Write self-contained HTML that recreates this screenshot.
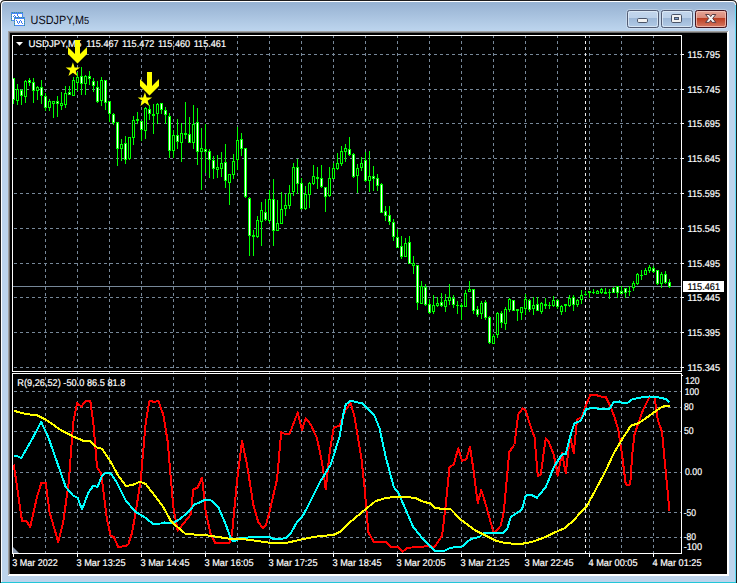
<!DOCTYPE html>
<html><head><meta charset="utf-8"><title>USDJPY,M5</title>
<style>html,body{margin:0;padding:0;background:#fff;overflow:hidden}svg{display:block}text{font-family:"Liberation Sans",sans-serif;text-rendering:geometricPrecision}</style></head><body>
<svg width="739" height="583" viewBox="0 0 739 583">
<defs>
<linearGradient id="tg" x1="0" y1="0" x2="0" y2="1"><stop offset="0" stop-color="#9ab5d4"/><stop offset="1" stop-color="#bdd5ee"/></linearGradient>
<linearGradient id="bt" x1="0" y1="0" x2="0" y2="1"><stop offset="0" stop-color="#c3d6ec"/><stop offset="0.43" stop-color="#bcd1e9"/><stop offset="0.44" stop-color="#9cb7d7"/><stop offset="1" stop-color="#b3cbe6"/></linearGradient>
<linearGradient id="bc" x1="0" y1="0" x2="0" y2="1"><stop offset="0" stop-color="#e6a799"/><stop offset="0.43" stop-color="#d98978"/><stop offset="0.44" stop-color="#bb3b1f"/><stop offset="1" stop-color="#d67c66"/></linearGradient>
</defs>
<rect x="0" y="0" width="739" height="583" fill="#fff"/>
<g shape-rendering="crispEdges">
<path d="M0 584 V5 Q0 0 5 0 H732 Q737 0 737 5 V584 Z" fill="#1c1c1c" shape-rendering="auto"/>
<path d="M1 584 V5 Q1 1 5 1 H732 Q736 1 736 5 V584 Z" fill="#fff" shape-rendering="auto"/>
<path d="M2 584 V5 Q2 2 5 2 H732 Q735 2 735 5 V584 Z" fill="#98b4d3" shape-rendering="auto"/>
<rect x="2" y="5" width="733" height="26" fill="url(#tg)"/>
<rect x="2" y="31" width="733" height="553" fill="#bdd4ec"/>
<rect x="735" y="5" width="1" height="579" fill="#62dcf7"/>
<rect x="1" y="582" width="735" height="1" fill="#22c6d8"/>
<rect x="8" y="31" width="721" height="545" fill="#fff"/>
<rect x="8" y="31" width="720" height="1" fill="#a0a0a0"/>
<rect x="8" y="31" width="1" height="544" fill="#a0a0a0"/>
<rect x="9" y="32" width="718" height="1" fill="#696969"/>
<rect x="9" y="32" width="1" height="542" fill="#696969"/>
<rect x="10" y="33" width="717" height="541" fill="#000"/>
</g>
<g shape-rendering="crispEdges" stroke="#778899" stroke-width="1" stroke-dasharray="3 3" fill="none">
<line x1="45.5" y1="35" x2="45.5" y2="371"/>
<line x1="45.5" y1="371" x2="45.5" y2="553"/>
<line x1="77.5" y1="35" x2="77.5" y2="371"/>
<line x1="77.5" y1="371" x2="77.5" y2="553"/>
<line x1="109.5" y1="35" x2="109.5" y2="371"/>
<line x1="109.5" y1="371" x2="109.5" y2="553"/>
<line x1="141.5" y1="35" x2="141.5" y2="371"/>
<line x1="141.5" y1="371" x2="141.5" y2="553"/>
<line x1="173.5" y1="35" x2="173.5" y2="371"/>
<line x1="173.5" y1="371" x2="173.5" y2="553"/>
<line x1="205.5" y1="35" x2="205.5" y2="371"/>
<line x1="205.5" y1="371" x2="205.5" y2="553"/>
<line x1="237.5" y1="35" x2="237.5" y2="371"/>
<line x1="237.5" y1="371" x2="237.5" y2="553"/>
<line x1="269.5" y1="35" x2="269.5" y2="371"/>
<line x1="269.5" y1="371" x2="269.5" y2="553"/>
<line x1="301.5" y1="35" x2="301.5" y2="371"/>
<line x1="301.5" y1="371" x2="301.5" y2="553"/>
<line x1="333.5" y1="35" x2="333.5" y2="371"/>
<line x1="333.5" y1="371" x2="333.5" y2="553"/>
<line x1="365.5" y1="35" x2="365.5" y2="371"/>
<line x1="365.5" y1="371" x2="365.5" y2="553"/>
<line x1="397.5" y1="35" x2="397.5" y2="371"/>
<line x1="397.5" y1="371" x2="397.5" y2="553"/>
<line x1="429.5" y1="35" x2="429.5" y2="371"/>
<line x1="429.5" y1="371" x2="429.5" y2="553"/>
<line x1="461.5" y1="35" x2="461.5" y2="371"/>
<line x1="461.5" y1="371" x2="461.5" y2="553"/>
<line x1="493.5" y1="35" x2="493.5" y2="371"/>
<line x1="493.5" y1="371" x2="493.5" y2="553"/>
<line x1="525.5" y1="35" x2="525.5" y2="371"/>
<line x1="525.5" y1="371" x2="525.5" y2="553"/>
<line x1="557.5" y1="35" x2="557.5" y2="371"/>
<line x1="557.5" y1="371" x2="557.5" y2="553"/>
<line x1="589.5" y1="35" x2="589.5" y2="371"/>
<line x1="589.5" y1="371" x2="589.5" y2="553"/>
<line x1="621.5" y1="35" x2="621.5" y2="371"/>
<line x1="621.5" y1="371" x2="621.5" y2="553"/>
<line x1="653.5" y1="35" x2="653.5" y2="371"/>
<line x1="653.5" y1="371" x2="653.5" y2="553"/>
<line x1="14" y1="54.5" x2="681" y2="54.5"/>
<line x1="14" y1="89.5" x2="681" y2="89.5"/>
<line x1="14" y1="123.5" x2="681" y2="123.5"/>
<line x1="14" y1="158.5" x2="681" y2="158.5"/>
<line x1="14" y1="193.5" x2="681" y2="193.5"/>
<line x1="14" y1="228.5" x2="681" y2="228.5"/>
<line x1="14" y1="263.5" x2="681" y2="263.5"/>
<line x1="14" y1="297.5" x2="681" y2="297.5"/>
<line x1="14" y1="332.5" x2="681" y2="332.5"/>
<line x1="14" y1="367.5" x2="681" y2="367.5"/>
<line x1="14" y1="391.5" x2="681" y2="391.5"/>
<line x1="14" y1="407.5" x2="681" y2="407.5"/>
<line x1="14" y1="431.5" x2="681" y2="431.5"/>
<line x1="14" y1="472.5" x2="681" y2="472.5"/>
<line x1="14" y1="512.5" x2="681" y2="512.5"/>
<line x1="14" y1="537.5" x2="681" y2="537.5"/>
</g>
<g shape-rendering="crispEdges" stroke="#f0f0f0" stroke-width="1" stroke-dasharray="3 3" fill="none">
<line x1="585.5" y1="35" x2="585.5" y2="371"/><line x1="585.5" y1="371" x2="585.5" y2="553"/>
</g>
<rect x="13" y="286" width="668" height="1" fill="#778899" shape-rendering="crispEdges"/>
<g shape-rendering="crispEdges">
<rect x="13" y="78" width="1" height="26" fill="#00ff00"/>
<rect x="12" y="78" width="3" height="22" fill="#00ff00"/>
<rect x="13" y="79" width="1" height="20" fill="#fff"/>
<rect x="17" y="84" width="1" height="21" fill="#00ff00"/>
<rect x="16" y="89" width="3" height="12" fill="#00ff00"/>
<rect x="17" y="90" width="1" height="10" fill="#000"/>
<rect x="21" y="89" width="1" height="16" fill="#00ff00"/>
<rect x="20" y="90" width="3" height="6" fill="#00ff00"/>
<rect x="21" y="91" width="1" height="4" fill="#fff"/>
<rect x="25" y="80" width="1" height="23" fill="#00ff00"/>
<rect x="24" y="81" width="3" height="16" fill="#00ff00"/>
<rect x="25" y="82" width="1" height="14" fill="#000"/>
<rect x="29" y="78" width="1" height="8" fill="#00ff00"/>
<rect x="28" y="80" width="3" height="3" fill="#00ff00"/>
<rect x="29" y="81" width="1" height="1" fill="#fff"/>
<rect x="33" y="78" width="1" height="25" fill="#00ff00"/>
<rect x="32" y="82" width="3" height="9" fill="#00ff00"/>
<rect x="33" y="83" width="1" height="7" fill="#fff"/>
<rect x="37" y="86" width="1" height="14" fill="#00ff00"/>
<rect x="36" y="87" width="3" height="4" fill="#00ff00"/>
<rect x="37" y="88" width="1" height="2" fill="#000"/>
<rect x="41" y="80" width="1" height="24" fill="#00ff00"/>
<rect x="40" y="87" width="3" height="9" fill="#00ff00"/>
<rect x="41" y="88" width="1" height="7" fill="#fff"/>
<rect x="45" y="93" width="1" height="18" fill="#00ff00"/>
<rect x="44" y="96" width="3" height="12" fill="#00ff00"/>
<rect x="45" y="97" width="1" height="10" fill="#fff"/>
<rect x="49" y="99" width="1" height="12" fill="#00ff00"/>
<rect x="48" y="101" width="3" height="7" fill="#00ff00"/>
<rect x="49" y="102" width="1" height="5" fill="#000"/>
<rect x="53" y="101" width="1" height="17" fill="#00ff00"/>
<rect x="52" y="101" width="3" height="3" fill="#00ff00"/>
<rect x="53" y="102" width="1" height="1" fill="#000"/>
<rect x="57" y="96" width="1" height="21" fill="#00ff00"/>
<rect x="56" y="101" width="3" height="3" fill="#00ff00"/>
<rect x="57" y="102" width="1" height="1" fill="#fff"/>
<rect x="61" y="92" width="1" height="18" fill="#00ff00"/>
<rect x="60" y="103" width="3" height="3" fill="#00ff00"/>
<rect x="61" y="104" width="1" height="1" fill="#000"/>
<rect x="65" y="86" width="1" height="22" fill="#00ff00"/>
<rect x="64" y="93" width="3" height="12" fill="#00ff00"/>
<rect x="65" y="94" width="1" height="10" fill="#000"/>
<rect x="69" y="86" width="1" height="9" fill="#00ff00"/>
<rect x="68" y="92" width="3" height="3" fill="#00ff00"/>
<rect x="69" y="93" width="1" height="1" fill="#fff"/>
<rect x="73" y="77" width="1" height="19" fill="#00ff00"/>
<rect x="72" y="80" width="3" height="16" fill="#00ff00"/>
<rect x="73" y="81" width="1" height="14" fill="#000"/>
<rect x="77" y="72" width="1" height="19" fill="#00ff00"/>
<rect x="76" y="77" width="3" height="6" fill="#00ff00"/>
<rect x="77" y="78" width="1" height="4" fill="#000"/>
<rect x="81" y="67" width="1" height="28" fill="#00ff00"/>
<rect x="80" y="76" width="3" height="8" fill="#00ff00"/>
<rect x="81" y="77" width="1" height="6" fill="#fff"/>
<rect x="85" y="75" width="1" height="20" fill="#00ff00"/>
<rect x="84" y="76" width="3" height="8" fill="#00ff00"/>
<rect x="85" y="77" width="1" height="6" fill="#000"/>
<rect x="89" y="71" width="1" height="14" fill="#00ff00"/>
<rect x="88" y="76" width="3" height="3" fill="#00ff00"/>
<rect x="89" y="77" width="1" height="1" fill="#fff"/>
<rect x="93" y="78" width="1" height="14" fill="#00ff00"/>
<rect x="92" y="81" width="3" height="5" fill="#00ff00"/>
<rect x="93" y="82" width="1" height="3" fill="#fff"/>
<rect x="97" y="81" width="1" height="22" fill="#00ff00"/>
<rect x="96" y="87" width="3" height="15" fill="#00ff00"/>
<rect x="97" y="88" width="1" height="13" fill="#fff"/>
<rect x="101" y="77" width="1" height="29" fill="#00ff00"/>
<rect x="100" y="80" width="3" height="21" fill="#00ff00"/>
<rect x="101" y="81" width="1" height="19" fill="#000"/>
<rect x="105" y="80" width="1" height="30" fill="#00ff00"/>
<rect x="104" y="80" width="3" height="23" fill="#00ff00"/>
<rect x="105" y="81" width="1" height="21" fill="#fff"/>
<rect x="109" y="101" width="1" height="21" fill="#00ff00"/>
<rect x="108" y="101" width="3" height="13" fill="#00ff00"/>
<rect x="109" y="102" width="1" height="11" fill="#fff"/>
<rect x="113" y="113" width="1" height="12" fill="#00ff00"/>
<rect x="112" y="114" width="3" height="9" fill="#00ff00"/>
<rect x="113" y="115" width="1" height="7" fill="#fff"/>
<rect x="117" y="122" width="1" height="44" fill="#00ff00"/>
<rect x="116" y="122" width="3" height="27" fill="#00ff00"/>
<rect x="117" y="123" width="1" height="25" fill="#fff"/>
<rect x="121" y="139" width="1" height="22" fill="#00ff00"/>
<rect x="120" y="144" width="3" height="5" fill="#00ff00"/>
<rect x="121" y="145" width="1" height="3" fill="#000"/>
<rect x="125" y="136" width="1" height="28" fill="#00ff00"/>
<rect x="124" y="143" width="3" height="17" fill="#00ff00"/>
<rect x="125" y="144" width="1" height="15" fill="#fff"/>
<rect x="129" y="137" width="1" height="23" fill="#00ff00"/>
<rect x="128" y="137" width="3" height="22" fill="#00ff00"/>
<rect x="129" y="138" width="1" height="20" fill="#000"/>
<rect x="133" y="116" width="1" height="29" fill="#00ff00"/>
<rect x="132" y="120" width="3" height="18" fill="#00ff00"/>
<rect x="133" y="121" width="1" height="16" fill="#000"/>
<rect x="137" y="112" width="1" height="12" fill="#00ff00"/>
<rect x="136" y="119" width="3" height="2" fill="#00ff00"/>
<rect x="141" y="121" width="1" height="20" fill="#00ff00"/>
<rect x="140" y="121" width="3" height="9" fill="#00ff00"/>
<rect x="141" y="122" width="1" height="7" fill="#fff"/>
<rect x="145" y="107" width="1" height="32" fill="#00ff00"/>
<rect x="144" y="108" width="3" height="23" fill="#00ff00"/>
<rect x="145" y="109" width="1" height="21" fill="#000"/>
<rect x="149" y="105" width="1" height="15" fill="#00ff00"/>
<rect x="148" y="109" width="3" height="5" fill="#00ff00"/>
<rect x="149" y="110" width="1" height="3" fill="#fff"/>
<rect x="153" y="104" width="1" height="30" fill="#00ff00"/>
<rect x="152" y="114" width="3" height="2" fill="#00ff00"/>
<rect x="157" y="103" width="1" height="21" fill="#00ff00"/>
<rect x="156" y="104" width="3" height="10" fill="#00ff00"/>
<rect x="157" y="105" width="1" height="8" fill="#000"/>
<rect x="161" y="103" width="1" height="11" fill="#00ff00"/>
<rect x="160" y="103" width="3" height="7" fill="#00ff00"/>
<rect x="161" y="104" width="1" height="5" fill="#fff"/>
<rect x="165" y="107" width="1" height="17" fill="#00ff00"/>
<rect x="164" y="110" width="3" height="5" fill="#00ff00"/>
<rect x="165" y="111" width="1" height="3" fill="#fff"/>
<rect x="169" y="113" width="1" height="45" fill="#00ff00"/>
<rect x="168" y="116" width="3" height="35" fill="#00ff00"/>
<rect x="169" y="117" width="1" height="33" fill="#fff"/>
<rect x="173" y="130" width="1" height="28" fill="#00ff00"/>
<rect x="172" y="135" width="3" height="16" fill="#00ff00"/>
<rect x="173" y="136" width="1" height="14" fill="#000"/>
<rect x="177" y="119" width="1" height="30" fill="#00ff00"/>
<rect x="176" y="135" width="3" height="7" fill="#00ff00"/>
<rect x="177" y="136" width="1" height="5" fill="#fff"/>
<rect x="181" y="123" width="1" height="39" fill="#00ff00"/>
<rect x="180" y="133" width="3" height="10" fill="#00ff00"/>
<rect x="181" y="134" width="1" height="8" fill="#000"/>
<rect x="185" y="102" width="1" height="37" fill="#00ff00"/>
<rect x="184" y="133" width="3" height="2" fill="#00ff00"/>
<rect x="189" y="117" width="1" height="26" fill="#00ff00"/>
<rect x="188" y="134" width="3" height="9" fill="#00ff00"/>
<rect x="189" y="135" width="1" height="7" fill="#fff"/>
<rect x="193" y="105" width="1" height="44" fill="#00ff00"/>
<rect x="192" y="124" width="3" height="19" fill="#00ff00"/>
<rect x="193" y="125" width="1" height="17" fill="#000"/>
<rect x="197" y="108" width="1" height="57" fill="#00ff00"/>
<rect x="196" y="122" width="3" height="30" fill="#00ff00"/>
<rect x="197" y="123" width="1" height="28" fill="#fff"/>
<rect x="201" y="128" width="1" height="62" fill="#00ff00"/>
<rect x="200" y="148" width="3" height="4" fill="#00ff00"/>
<rect x="201" y="149" width="1" height="2" fill="#000"/>
<rect x="205" y="124" width="1" height="49" fill="#00ff00"/>
<rect x="204" y="149" width="3" height="3" fill="#00ff00"/>
<rect x="205" y="150" width="1" height="1" fill="#fff"/>
<rect x="209" y="149" width="1" height="29" fill="#00ff00"/>
<rect x="208" y="151" width="3" height="9" fill="#00ff00"/>
<rect x="209" y="152" width="1" height="7" fill="#fff"/>
<rect x="213" y="156" width="1" height="23" fill="#00ff00"/>
<rect x="212" y="160" width="3" height="9" fill="#00ff00"/>
<rect x="213" y="161" width="1" height="7" fill="#fff"/>
<rect x="217" y="155" width="1" height="23" fill="#00ff00"/>
<rect x="216" y="167" width="3" height="3" fill="#00ff00"/>
<rect x="217" y="168" width="1" height="1" fill="#000"/>
<rect x="221" y="152" width="1" height="25" fill="#00ff00"/>
<rect x="220" y="163" width="3" height="6" fill="#00ff00"/>
<rect x="221" y="164" width="1" height="4" fill="#000"/>
<rect x="225" y="144" width="1" height="44" fill="#00ff00"/>
<rect x="224" y="162" width="3" height="19" fill="#00ff00"/>
<rect x="225" y="163" width="1" height="17" fill="#fff"/>
<rect x="229" y="174" width="1" height="31" fill="#00ff00"/>
<rect x="228" y="174" width="3" height="9" fill="#00ff00"/>
<rect x="229" y="175" width="1" height="7" fill="#000"/>
<rect x="233" y="154" width="1" height="25" fill="#00ff00"/>
<rect x="232" y="161" width="3" height="14" fill="#00ff00"/>
<rect x="233" y="162" width="1" height="12" fill="#000"/>
<rect x="237" y="127" width="1" height="43" fill="#00ff00"/>
<rect x="236" y="140" width="3" height="20" fill="#00ff00"/>
<rect x="237" y="141" width="1" height="18" fill="#000"/>
<rect x="241" y="133" width="1" height="23" fill="#00ff00"/>
<rect x="240" y="139" width="3" height="10" fill="#00ff00"/>
<rect x="241" y="140" width="1" height="8" fill="#fff"/>
<rect x="245" y="148" width="1" height="50" fill="#00ff00"/>
<rect x="244" y="148" width="3" height="49" fill="#00ff00"/>
<rect x="245" y="149" width="1" height="47" fill="#fff"/>
<rect x="249" y="197" width="1" height="59" fill="#00ff00"/>
<rect x="248" y="198" width="3" height="38" fill="#00ff00"/>
<rect x="249" y="199" width="1" height="36" fill="#fff"/>
<rect x="253" y="230" width="1" height="26" fill="#00ff00"/>
<rect x="252" y="235" width="3" height="2" fill="#00ff00"/>
<rect x="257" y="216" width="1" height="22" fill="#00ff00"/>
<rect x="256" y="220" width="3" height="17" fill="#00ff00"/>
<rect x="257" y="221" width="1" height="15" fill="#000"/>
<rect x="261" y="202" width="1" height="44" fill="#00ff00"/>
<rect x="260" y="210" width="3" height="12" fill="#00ff00"/>
<rect x="261" y="211" width="1" height="10" fill="#000"/>
<rect x="265" y="199" width="1" height="22" fill="#00ff00"/>
<rect x="264" y="212" width="3" height="8" fill="#00ff00"/>
<rect x="265" y="213" width="1" height="6" fill="#fff"/>
<rect x="269" y="190" width="1" height="33" fill="#00ff00"/>
<rect x="268" y="199" width="3" height="22" fill="#00ff00"/>
<rect x="269" y="200" width="1" height="20" fill="#000"/>
<rect x="273" y="179" width="1" height="67" fill="#00ff00"/>
<rect x="272" y="199" width="3" height="32" fill="#00ff00"/>
<rect x="273" y="200" width="1" height="30" fill="#fff"/>
<rect x="277" y="200" width="1" height="31" fill="#00ff00"/>
<rect x="276" y="223" width="3" height="8" fill="#00ff00"/>
<rect x="277" y="224" width="1" height="6" fill="#000"/>
<rect x="281" y="192" width="1" height="32" fill="#00ff00"/>
<rect x="280" y="209" width="3" height="15" fill="#00ff00"/>
<rect x="281" y="210" width="1" height="13" fill="#000"/>
<rect x="285" y="194" width="1" height="22" fill="#00ff00"/>
<rect x="284" y="205" width="3" height="4" fill="#00ff00"/>
<rect x="285" y="206" width="1" height="2" fill="#000"/>
<rect x="289" y="185" width="1" height="24" fill="#00ff00"/>
<rect x="288" y="193" width="3" height="13" fill="#00ff00"/>
<rect x="289" y="194" width="1" height="11" fill="#000"/>
<rect x="293" y="163" width="1" height="33" fill="#00ff00"/>
<rect x="292" y="167" width="3" height="25" fill="#00ff00"/>
<rect x="293" y="168" width="1" height="23" fill="#000"/>
<rect x="297" y="159" width="1" height="35" fill="#00ff00"/>
<rect x="296" y="167" width="3" height="17" fill="#00ff00"/>
<rect x="297" y="168" width="1" height="15" fill="#fff"/>
<rect x="301" y="178" width="1" height="32" fill="#00ff00"/>
<rect x="300" y="183" width="3" height="26" fill="#00ff00"/>
<rect x="301" y="184" width="1" height="24" fill="#fff"/>
<rect x="305" y="186" width="1" height="24" fill="#00ff00"/>
<rect x="304" y="194" width="3" height="15" fill="#00ff00"/>
<rect x="305" y="195" width="1" height="13" fill="#000"/>
<rect x="309" y="182" width="1" height="26" fill="#00ff00"/>
<rect x="308" y="183" width="3" height="12" fill="#00ff00"/>
<rect x="309" y="184" width="1" height="10" fill="#000"/>
<rect x="313" y="165" width="1" height="20" fill="#00ff00"/>
<rect x="312" y="176" width="3" height="8" fill="#00ff00"/>
<rect x="313" y="177" width="1" height="6" fill="#000"/>
<rect x="317" y="167" width="1" height="22" fill="#00ff00"/>
<rect x="316" y="177" width="3" height="2" fill="#00ff00"/>
<rect x="321" y="165" width="1" height="23" fill="#00ff00"/>
<rect x="320" y="178" width="3" height="9" fill="#00ff00"/>
<rect x="321" y="179" width="1" height="7" fill="#fff"/>
<rect x="325" y="187" width="1" height="25" fill="#00ff00"/>
<rect x="324" y="187" width="3" height="10" fill="#00ff00"/>
<rect x="325" y="188" width="1" height="8" fill="#fff"/>
<rect x="329" y="167" width="1" height="30" fill="#00ff00"/>
<rect x="328" y="178" width="3" height="18" fill="#00ff00"/>
<rect x="329" y="179" width="1" height="16" fill="#000"/>
<rect x="333" y="163" width="1" height="16" fill="#00ff00"/>
<rect x="332" y="168" width="3" height="11" fill="#00ff00"/>
<rect x="333" y="169" width="1" height="9" fill="#000"/>
<rect x="337" y="153" width="1" height="17" fill="#00ff00"/>
<rect x="336" y="163" width="3" height="6" fill="#00ff00"/>
<rect x="337" y="164" width="1" height="4" fill="#000"/>
<rect x="341" y="146" width="1" height="20" fill="#00ff00"/>
<rect x="340" y="151" width="3" height="13" fill="#00ff00"/>
<rect x="341" y="152" width="1" height="11" fill="#000"/>
<rect x="345" y="144" width="1" height="18" fill="#00ff00"/>
<rect x="344" y="148" width="3" height="4" fill="#00ff00"/>
<rect x="345" y="149" width="1" height="2" fill="#000"/>
<rect x="349" y="137" width="1" height="19" fill="#00ff00"/>
<rect x="348" y="149" width="3" height="6" fill="#00ff00"/>
<rect x="349" y="150" width="1" height="4" fill="#fff"/>
<rect x="353" y="153" width="1" height="25" fill="#00ff00"/>
<rect x="352" y="154" width="3" height="23" fill="#00ff00"/>
<rect x="353" y="155" width="1" height="21" fill="#fff"/>
<rect x="357" y="164" width="1" height="29" fill="#00ff00"/>
<rect x="356" y="168" width="3" height="8" fill="#00ff00"/>
<rect x="357" y="169" width="1" height="6" fill="#000"/>
<rect x="361" y="157" width="1" height="14" fill="#00ff00"/>
<rect x="360" y="163" width="3" height="5" fill="#00ff00"/>
<rect x="361" y="164" width="1" height="3" fill="#000"/>
<rect x="365" y="152" width="1" height="30" fill="#00ff00"/>
<rect x="364" y="160" width="3" height="21" fill="#00ff00"/>
<rect x="365" y="161" width="1" height="19" fill="#fff"/>
<rect x="369" y="151" width="1" height="41" fill="#00ff00"/>
<rect x="368" y="176" width="3" height="5" fill="#00ff00"/>
<rect x="369" y="177" width="1" height="3" fill="#000"/>
<rect x="373" y="166" width="1" height="25" fill="#00ff00"/>
<rect x="372" y="176" width="3" height="3" fill="#00ff00"/>
<rect x="373" y="177" width="1" height="1" fill="#fff"/>
<rect x="377" y="174" width="1" height="17" fill="#00ff00"/>
<rect x="376" y="178" width="3" height="8" fill="#00ff00"/>
<rect x="377" y="179" width="1" height="6" fill="#fff"/>
<rect x="381" y="183" width="1" height="30" fill="#00ff00"/>
<rect x="380" y="184" width="3" height="29" fill="#00ff00"/>
<rect x="381" y="185" width="1" height="27" fill="#fff"/>
<rect x="385" y="206" width="1" height="15" fill="#00ff00"/>
<rect x="384" y="211" width="3" height="5" fill="#00ff00"/>
<rect x="385" y="212" width="1" height="3" fill="#fff"/>
<rect x="389" y="206" width="1" height="19" fill="#00ff00"/>
<rect x="388" y="215" width="3" height="7" fill="#00ff00"/>
<rect x="389" y="216" width="1" height="5" fill="#fff"/>
<rect x="393" y="219" width="1" height="22" fill="#00ff00"/>
<rect x="392" y="222" width="3" height="15" fill="#00ff00"/>
<rect x="393" y="223" width="1" height="13" fill="#fff"/>
<rect x="397" y="229" width="1" height="19" fill="#00ff00"/>
<rect x="396" y="237" width="3" height="11" fill="#00ff00"/>
<rect x="397" y="238" width="1" height="9" fill="#fff"/>
<rect x="401" y="236" width="1" height="23" fill="#00ff00"/>
<rect x="400" y="246" width="3" height="11" fill="#00ff00"/>
<rect x="401" y="247" width="1" height="9" fill="#fff"/>
<rect x="405" y="238" width="1" height="19" fill="#00ff00"/>
<rect x="404" y="243" width="3" height="14" fill="#00ff00"/>
<rect x="405" y="244" width="1" height="12" fill="#000"/>
<rect x="409" y="236" width="1" height="28" fill="#00ff00"/>
<rect x="408" y="242" width="3" height="22" fill="#00ff00"/>
<rect x="409" y="243" width="1" height="20" fill="#fff"/>
<rect x="413" y="256" width="1" height="18" fill="#00ff00"/>
<rect x="412" y="263" width="3" height="3" fill="#00ff00"/>
<rect x="413" y="264" width="1" height="1" fill="#000"/>
<rect x="417" y="265" width="1" height="45" fill="#00ff00"/>
<rect x="416" y="265" width="3" height="38" fill="#00ff00"/>
<rect x="417" y="266" width="1" height="36" fill="#fff"/>
<rect x="421" y="281" width="1" height="23" fill="#00ff00"/>
<rect x="420" y="286" width="3" height="18" fill="#00ff00"/>
<rect x="421" y="287" width="1" height="16" fill="#000"/>
<rect x="425" y="284" width="1" height="22" fill="#00ff00"/>
<rect x="424" y="287" width="3" height="18" fill="#00ff00"/>
<rect x="425" y="288" width="1" height="16" fill="#fff"/>
<rect x="429" y="299" width="1" height="15" fill="#00ff00"/>
<rect x="428" y="304" width="3" height="9" fill="#00ff00"/>
<rect x="429" y="305" width="1" height="7" fill="#fff"/>
<rect x="433" y="295" width="1" height="19" fill="#00ff00"/>
<rect x="432" y="305" width="3" height="7" fill="#00ff00"/>
<rect x="433" y="306" width="1" height="5" fill="#000"/>
<rect x="437" y="297" width="1" height="10" fill="#00ff00"/>
<rect x="436" y="303" width="3" height="3" fill="#00ff00"/>
<rect x="437" y="304" width="1" height="1" fill="#000"/>
<rect x="441" y="293" width="1" height="14" fill="#00ff00"/>
<rect x="440" y="302" width="3" height="4" fill="#00ff00"/>
<rect x="441" y="303" width="1" height="2" fill="#fff"/>
<rect x="445" y="294" width="1" height="18" fill="#00ff00"/>
<rect x="444" y="300" width="3" height="7" fill="#00ff00"/>
<rect x="445" y="301" width="1" height="5" fill="#000"/>
<rect x="449" y="284" width="1" height="21" fill="#00ff00"/>
<rect x="448" y="297" width="3" height="4" fill="#00ff00"/>
<rect x="449" y="298" width="1" height="2" fill="#000"/>
<rect x="453" y="295" width="1" height="13" fill="#00ff00"/>
<rect x="452" y="298" width="3" height="7" fill="#00ff00"/>
<rect x="453" y="299" width="1" height="5" fill="#fff"/>
<rect x="457" y="301" width="1" height="13" fill="#00ff00"/>
<rect x="456" y="305" width="3" height="1" fill="#00ff00"/>
<rect x="461" y="303" width="1" height="17" fill="#00ff00"/>
<rect x="460" y="305" width="3" height="2" fill="#00ff00"/>
<rect x="465" y="290" width="1" height="17" fill="#00ff00"/>
<rect x="464" y="293" width="3" height="14" fill="#00ff00"/>
<rect x="465" y="294" width="1" height="12" fill="#000"/>
<rect x="469" y="281" width="1" height="11" fill="#00ff00"/>
<rect x="468" y="289" width="3" height="3" fill="#00ff00"/>
<rect x="469" y="290" width="1" height="1" fill="#000"/>
<rect x="473" y="289" width="1" height="25" fill="#00ff00"/>
<rect x="472" y="289" width="3" height="22" fill="#00ff00"/>
<rect x="473" y="290" width="1" height="20" fill="#fff"/>
<rect x="477" y="306" width="1" height="11" fill="#00ff00"/>
<rect x="476" y="309" width="3" height="6" fill="#00ff00"/>
<rect x="477" y="310" width="1" height="4" fill="#fff"/>
<rect x="481" y="301" width="1" height="18" fill="#00ff00"/>
<rect x="480" y="303" width="3" height="11" fill="#00ff00"/>
<rect x="481" y="304" width="1" height="9" fill="#000"/>
<rect x="485" y="300" width="1" height="20" fill="#00ff00"/>
<rect x="484" y="302" width="3" height="16" fill="#00ff00"/>
<rect x="485" y="303" width="1" height="14" fill="#fff"/>
<rect x="489" y="316" width="1" height="28" fill="#00ff00"/>
<rect x="488" y="317" width="3" height="26" fill="#00ff00"/>
<rect x="489" y="318" width="1" height="24" fill="#fff"/>
<rect x="493" y="334" width="1" height="10" fill="#00ff00"/>
<rect x="492" y="336" width="3" height="8" fill="#00ff00"/>
<rect x="493" y="337" width="1" height="6" fill="#000"/>
<rect x="497" y="312" width="1" height="26" fill="#00ff00"/>
<rect x="496" y="313" width="3" height="22" fill="#00ff00"/>
<rect x="497" y="314" width="1" height="20" fill="#000"/>
<rect x="501" y="311" width="1" height="17" fill="#00ff00"/>
<rect x="500" y="313" width="3" height="10" fill="#00ff00"/>
<rect x="501" y="314" width="1" height="8" fill="#fff"/>
<rect x="505" y="307" width="1" height="23" fill="#00ff00"/>
<rect x="504" y="309" width="3" height="15" fill="#00ff00"/>
<rect x="505" y="310" width="1" height="13" fill="#000"/>
<rect x="509" y="298" width="1" height="14" fill="#00ff00"/>
<rect x="508" y="299" width="3" height="11" fill="#00ff00"/>
<rect x="509" y="300" width="1" height="9" fill="#000"/>
<rect x="513" y="300" width="1" height="11" fill="#00ff00"/>
<rect x="512" y="300" width="3" height="11" fill="#00ff00"/>
<rect x="513" y="301" width="1" height="9" fill="#fff"/>
<rect x="517" y="309" width="1" height="12" fill="#00ff00"/>
<rect x="516" y="309" width="3" height="2" fill="#00ff00"/>
<rect x="521" y="307" width="1" height="13" fill="#00ff00"/>
<rect x="520" y="307" width="3" height="6" fill="#00ff00"/>
<rect x="521" y="308" width="1" height="4" fill="#000"/>
<rect x="525" y="294" width="1" height="21" fill="#00ff00"/>
<rect x="524" y="299" width="3" height="10" fill="#00ff00"/>
<rect x="525" y="300" width="1" height="8" fill="#000"/>
<rect x="529" y="299" width="1" height="13" fill="#00ff00"/>
<rect x="528" y="300" width="3" height="10" fill="#00ff00"/>
<rect x="529" y="301" width="1" height="8" fill="#fff"/>
<rect x="533" y="297" width="1" height="18" fill="#00ff00"/>
<rect x="532" y="305" width="3" height="4" fill="#00ff00"/>
<rect x="533" y="306" width="1" height="2" fill="#000"/>
<rect x="537" y="297" width="1" height="14" fill="#00ff00"/>
<rect x="536" y="304" width="3" height="7" fill="#00ff00"/>
<rect x="537" y="305" width="1" height="5" fill="#fff"/>
<rect x="541" y="302" width="1" height="12" fill="#00ff00"/>
<rect x="540" y="303" width="3" height="9" fill="#00ff00"/>
<rect x="541" y="304" width="1" height="7" fill="#000"/>
<rect x="545" y="298" width="1" height="11" fill="#00ff00"/>
<rect x="544" y="304" width="3" height="2" fill="#00ff00"/>
<rect x="549" y="302" width="1" height="7" fill="#00ff00"/>
<rect x="548" y="305" width="3" height="1" fill="#00ff00"/>
<rect x="553" y="296" width="1" height="11" fill="#00ff00"/>
<rect x="552" y="300" width="3" height="6" fill="#00ff00"/>
<rect x="553" y="301" width="1" height="4" fill="#000"/>
<rect x="557" y="299" width="1" height="10" fill="#00ff00"/>
<rect x="556" y="300" width="3" height="7" fill="#00ff00"/>
<rect x="557" y="301" width="1" height="5" fill="#fff"/>
<rect x="561" y="305" width="1" height="10" fill="#00ff00"/>
<rect x="560" y="306" width="3" height="6" fill="#00ff00"/>
<rect x="561" y="307" width="1" height="4" fill="#000"/>
<rect x="565" y="304" width="1" height="8" fill="#00ff00"/>
<rect x="564" y="304" width="3" height="2" fill="#00ff00"/>
<rect x="569" y="295" width="1" height="12" fill="#00ff00"/>
<rect x="568" y="298" width="3" height="8" fill="#00ff00"/>
<rect x="569" y="299" width="1" height="6" fill="#000"/>
<rect x="573" y="295" width="1" height="16" fill="#00ff00"/>
<rect x="572" y="297" width="3" height="8" fill="#00ff00"/>
<rect x="573" y="298" width="1" height="6" fill="#fff"/>
<rect x="577" y="299" width="1" height="8" fill="#00ff00"/>
<rect x="576" y="300" width="3" height="5" fill="#00ff00"/>
<rect x="577" y="301" width="1" height="3" fill="#000"/>
<rect x="581" y="290" width="1" height="14" fill="#00ff00"/>
<rect x="580" y="295" width="3" height="5" fill="#00ff00"/>
<rect x="581" y="296" width="1" height="3" fill="#000"/>
<rect x="585" y="291" width="1" height="5" fill="#00ff00"/>
<rect x="584" y="294" width="3" height="1" fill="#00ff00"/>
<rect x="589" y="291" width="1" height="7" fill="#00ff00"/>
<rect x="588" y="291" width="3" height="2" fill="#00ff00"/>
<rect x="593" y="289" width="1" height="5" fill="#00ff00"/>
<rect x="592" y="292" width="3" height="1" fill="#00ff00"/>
<rect x="597" y="290" width="1" height="4" fill="#00ff00"/>
<rect x="596" y="291" width="3" height="3" fill="#00ff00"/>
<rect x="597" y="292" width="1" height="1" fill="#000"/>
<rect x="601" y="288" width="1" height="6" fill="#00ff00"/>
<rect x="600" y="289" width="3" height="4" fill="#00ff00"/>
<rect x="601" y="290" width="1" height="2" fill="#000"/>
<rect x="605" y="288" width="1" height="6" fill="#00ff00"/>
<rect x="604" y="292" width="3" height="2" fill="#00ff00"/>
<rect x="609" y="289" width="1" height="10" fill="#00ff00"/>
<rect x="608" y="292" width="3" height="1" fill="#00ff00"/>
<rect x="613" y="287" width="1" height="6" fill="#00ff00"/>
<rect x="612" y="288" width="3" height="5" fill="#00ff00"/>
<rect x="613" y="289" width="1" height="3" fill="#fff"/>
<rect x="617" y="286" width="1" height="12" fill="#00ff00"/>
<rect x="616" y="286" width="3" height="7" fill="#00ff00"/>
<rect x="617" y="287" width="1" height="5" fill="#fff"/>
<rect x="621" y="286" width="1" height="8" fill="#00ff00"/>
<rect x="620" y="291" width="3" height="3" fill="#00ff00"/>
<rect x="621" y="292" width="1" height="1" fill="#fff"/>
<rect x="625" y="288" width="1" height="10" fill="#00ff00"/>
<rect x="624" y="288" width="3" height="5" fill="#00ff00"/>
<rect x="625" y="289" width="1" height="3" fill="#fff"/>
<rect x="629" y="286" width="1" height="10" fill="#00ff00"/>
<rect x="628" y="291" width="3" height="1" fill="#00ff00"/>
<rect x="633" y="281" width="1" height="10" fill="#00ff00"/>
<rect x="632" y="283" width="3" height="5" fill="#00ff00"/>
<rect x="633" y="284" width="1" height="3" fill="#000"/>
<rect x="637" y="273" width="1" height="12" fill="#00ff00"/>
<rect x="636" y="274" width="3" height="10" fill="#00ff00"/>
<rect x="637" y="275" width="1" height="8" fill="#000"/>
<rect x="641" y="270" width="1" height="10" fill="#00ff00"/>
<rect x="640" y="275" width="3" height="1" fill="#00ff00"/>
<rect x="645" y="268" width="1" height="7" fill="#00ff00"/>
<rect x="644" y="270" width="3" height="5" fill="#00ff00"/>
<rect x="645" y="271" width="1" height="3" fill="#000"/>
<rect x="649" y="265" width="1" height="8" fill="#00ff00"/>
<rect x="648" y="267" width="3" height="4" fill="#00ff00"/>
<rect x="649" y="268" width="1" height="2" fill="#000"/>
<rect x="653" y="266" width="1" height="7" fill="#00ff00"/>
<rect x="652" y="268" width="3" height="4" fill="#00ff00"/>
<rect x="653" y="269" width="1" height="2" fill="#fff"/>
<rect x="657" y="270" width="1" height="15" fill="#00ff00"/>
<rect x="656" y="270" width="3" height="14" fill="#00ff00"/>
<rect x="657" y="271" width="1" height="12" fill="#fff"/>
<rect x="661" y="272" width="1" height="16" fill="#00ff00"/>
<rect x="660" y="274" width="3" height="10" fill="#00ff00"/>
<rect x="661" y="275" width="1" height="8" fill="#000"/>
<rect x="665" y="271" width="1" height="13" fill="#00ff00"/>
<rect x="664" y="274" width="3" height="9" fill="#00ff00"/>
<rect x="665" y="275" width="1" height="7" fill="#fff"/>
<rect x="669" y="279" width="1" height="9" fill="#00ff00"/>
<rect x="668" y="282" width="3" height="5" fill="#00ff00"/>
<rect x="669" y="283" width="1" height="3" fill="#fff"/>
</g>
<g shape-rendering="crispEdges" fill="none" stroke="#fff" stroke-width="1">
<rect x="12.5" y="35.5" width="669" height="336"/>
<rect x="12.5" y="373.5" width="669" height="180"/>
</g>
<g shape-rendering="crispEdges" fill="#fff">
<rect x="682" y="54" width="2" height="1"/>
<rect x="682" y="89" width="2" height="1"/>
<rect x="682" y="123" width="2" height="1"/>
<rect x="682" y="158" width="2" height="1"/>
<rect x="682" y="193" width="2" height="1"/>
<rect x="682" y="228" width="2" height="1"/>
<rect x="682" y="263" width="2" height="1"/>
<rect x="682" y="297" width="2" height="1"/>
<rect x="682" y="332" width="2" height="1"/>
<rect x="682" y="367" width="2" height="1"/>
<rect x="682" y="375" width="1" height="1"/>
<rect x="13" y="554" width="1" height="3"/>
<rect x="77" y="554" width="1" height="3"/>
<rect x="141" y="554" width="1" height="3"/>
<rect x="205" y="554" width="1" height="3"/>
<rect x="269" y="554" width="1" height="3"/>
<rect x="333" y="554" width="1" height="3"/>
<rect x="397" y="554" width="1" height="3"/>
<rect x="461" y="554" width="1" height="3"/>
<rect x="525" y="554" width="1" height="3"/>
<rect x="589" y="554" width="1" height="3"/>
<rect x="653" y="554" width="1" height="3"/>
</g>
<path d="M13 547 L19 553 L13 553 Z" fill="#8c9bb0"/>
<clipPath id="sc"><rect x="13" y="374" width="668" height="179"/></clipPath>
<g clip-path="url(#sc)">
<polyline points="13.75,464.50 22.00,520.75 26.25,520.75 30.25,527.00 37.00,497.00 41.25,483.00 45.75,483.00 49.50,512.00 58.25,542.00 63.25,522.00 68.75,482.00 73.25,422.00 77.00,403.25 81.50,406.50 85.75,400.75 90.25,400.75 93.25,422.00 97.00,467.00 101.25,474.00 107.00,519.50 110.75,535.75 113.75,537.00 118.25,547.00 125.75,546.00 128.25,544.50 132.00,533.00 135.75,512.00 140.75,479.50 145.75,422.00 149.50,400.75 154.50,402.00 158.25,400.75 163.25,414.50 167.75,442.00 173.25,507.00 177.75,530.75 185.75,520.75 190.75,514.50 193.25,489.50 197.75,487.50 202.00,477.50 205.75,512.00 210.75,534.50 215.25,543.00 229.50,543.00 232.00,534.50 237.00,480.75 242.00,440.75 247.00,464.50 253.25,504.50 258.25,522.00 262.75,528.00 265.75,525.75 269.50,512.00 277.00,479.50 281.25,432.00 285.75,434.50 289.50,434.00 297.75,412.50 302.00,430.00 305.75,418.25 310.75,424.50 317.00,438.25 322.00,462.00 325.75,489.50 329.75,452.00 333.75,427.50 339.50,425.75 345.75,409.50 350.75,403.25 354.50,417.00 361.25,457.00 364.55,487.00 368.25,532.00 373.75,542.00 385.75,542.00 390.75,547.00 398.25,547.00 402.50,552.00 407.00,547.75 420.75,547.00 428.25,545.75 434.50,547.00 442.00,535.75 445.25,509.50 449.50,467.00 453.75,464.50 458.25,448.25 462.00,460.75 466.25,459.50 470.00,447.00 473.25,468.25 477.75,503.25 481.25,490.00 485.75,504.50 493.75,533.25 500.75,525.75 503.75,512.00 509.25,452.00 514.50,444.50 518.25,414.50 522.75,408.25 525.75,410.75 530.75,427.00 534.50,437.00 537.75,475.75 540.75,474.50 545.75,438.25 548.75,442.00 553.75,454.50 557.75,475.75 562.00,453.25 565.75,473.25 570.00,435.75 573.75,453.25 577.00,419.50 582.00,417.00 586.25,404.50 590.25,395.00 595.75,395.00 600.75,396.50 605.75,397.00 610.25,405.75 614.50,417.00 618.25,429.50 622.00,454.50 625.75,484.50 630.25,484.50 632.00,457.00 634.50,434.50 638.25,423.25 643.25,409.50 649.50,397.00 654.50,397.00 657.75,419.50 662.00,432.00 665.75,472.00 669.50,510.75" fill="none" stroke="#ff0000" stroke-width="2" stroke-linejoin="round" shape-rendering="crispEdges"/>
<polyline points="13.75,455.75 17.75,456.50 21.25,458.25 33.25,437.00 41.25,422.00 48.25,437.00 65.75,487.00 73.25,495.75 77.75,498.00 82.00,509.50 88.25,493.00 93.25,485.75 97.50,487.00 102.00,475.75 105.75,473.00 110.75,473.50 115.75,480.75 125.75,500.75 135.75,512.00 145.75,518.00 152.75,523.75 160.75,523.50 164.50,522.50 173.25,523.00 180.75,518.50 189.50,510.75 194.50,504.50 199.50,502.50 205.75,499.50 212.00,500.75 218.25,507.00 225.75,524.50 230.75,538.25 233.75,541.50 239.50,538.25 253.25,537.00 269.50,537.00 274.50,539.50 285.75,538.25 290.75,533.25 297.00,522.00 302.00,517.00 308.25,505.75 320.75,480.75 330.75,464.50 339.50,437.00 343.25,414.50 345.75,404.50 350.75,400.75 355.75,402.00 362.00,403.25 367.00,408.25 374.50,415.75 379.50,428.25 385.75,457.00 393.75,487.00 398.25,492.50 413.25,527.00 423.25,539.50 434.50,550.75 444.50,550.75 450.75,547.75 462.00,546.50 470.75,539.00 479.50,537.00 483.25,533.25 503.25,532.75 507.00,529.50 510.75,517.00 522.00,509.50 525.75,495.50 530.75,494.50 537.00,497.75 545.75,487.00 554.50,465.75 562.00,454.50 565.75,454.00 570.75,434.50 574.50,423.25 580.75,420.75 586.25,409.00 590.25,408.25 609.50,409.00 613.75,402.00 619.50,401.50 622.00,403.25 627.00,403.25 632.00,399.50 640.75,397.50 649.50,396.50 657.00,397.00 665.75,399.00 669.50,402.50" fill="none" stroke="#00ffff" stroke-width="2" stroke-linejoin="round" shape-rendering="crispEdges"/>
<polyline points="13.75,410.75 25.75,414.00 37.00,415.25 45.75,419.50 60.75,430.00 64.50,432.00 73.25,436.50 83.25,440.75 90.75,441.50 97.00,447.50 102.00,448.75 110.75,462.00 118.25,475.75 125.75,485.75 132.00,485.25 138.25,482.50 140.75,482.00 145.75,484.00 155.75,497.00 163.25,507.00 170.75,520.75 180.75,530.00 185.75,534.00 205.75,535.25 218.25,537.00 230.75,539.00 245.75,539.50 255.75,540.75 268.25,542.50 288.25,542.50 303.25,539.00 320.75,535.75 333.25,535.25 340.75,531.50 350.75,521.50 360.75,513.25 365.75,509.00 375.75,501.00 385.75,498.00 395.75,496.75 408.25,497.00 415.75,498.25 424.50,502.25 430.25,503.00 434.50,507.50 440.75,508.75 450.75,509.25 460.75,519.50 475.75,530.75 488.25,537.00 495.75,540.75 505.75,543.25 520.75,544.00 530.75,542.25 545.75,537.00 555.75,532.00 564.50,528.25 573.25,520.75 583.25,509.50 586.25,507.00 595.75,489.50 605.75,470.75 613.75,453.25 622.00,439.50 630.75,425.75 638.25,423.25 645.75,418.25 654.50,412.00 660.75,407.50 665.75,405.75 669.50,405.75" fill="none" stroke="#ffff00" stroke-width="2" stroke-linejoin="round" shape-rendering="crispEdges"/>
</g>
<path d="M16 42 H23 L19.5 45.8 Z" fill="#fff"/>
<text transform="translate(28.5,46.6) scale(1,1)" font-size="9.8" fill="#fff" text-anchor="start" stroke="#fff" stroke-width="0.2"  textLength="53" lengthAdjust="spacingAndGlyphs">USDJPY,M5</text>
<text transform="translate(86.3,46.6) scale(1,1)" font-size="9.8" fill="#fff" text-anchor="start" stroke="#fff" stroke-width="0.2"  textLength="32.3" lengthAdjust="spacingAndGlyphs">115.467</text>
<text transform="translate(122.1,46.6) scale(1,1)" font-size="9.8" fill="#fff" text-anchor="start" stroke="#fff" stroke-width="0.2"  textLength="32.3" lengthAdjust="spacingAndGlyphs">115.472</text>
<text transform="translate(157.89999999999998,46.6) scale(1,1)" font-size="9.8" fill="#fff" text-anchor="start" stroke="#fff" stroke-width="0.2"  textLength="32.3" lengthAdjust="spacingAndGlyphs">115.460</text>
<text transform="translate(193.7,46.6) scale(1,1)" font-size="9.8" fill="#fff" text-anchor="start" stroke="#fff" stroke-width="0.2"  textLength="32.3" lengthAdjust="spacingAndGlyphs">115.461</text>
<text transform="translate(687.5,57.9) scale(1,1)" font-size="9.8" fill="#fff" text-anchor="start" stroke="#fff" stroke-width="0.2"  textLength="32.5" lengthAdjust="spacingAndGlyphs">115.795</text>
<text transform="translate(687.5,92.9) scale(1,1)" font-size="9.8" fill="#fff" text-anchor="start" stroke="#fff" stroke-width="0.2"  textLength="32.5" lengthAdjust="spacingAndGlyphs">115.745</text>
<text transform="translate(687.5,126.9) scale(1,1)" font-size="9.8" fill="#fff" text-anchor="start" stroke="#fff" stroke-width="0.2"  textLength="32.5" lengthAdjust="spacingAndGlyphs">115.695</text>
<text transform="translate(687.5,161.9) scale(1,1)" font-size="9.8" fill="#fff" text-anchor="start" stroke="#fff" stroke-width="0.2"  textLength="32.5" lengthAdjust="spacingAndGlyphs">115.645</text>
<text transform="translate(687.5,196.9) scale(1,1)" font-size="9.8" fill="#fff" text-anchor="start" stroke="#fff" stroke-width="0.2"  textLength="32.5" lengthAdjust="spacingAndGlyphs">115.595</text>
<text transform="translate(687.5,231.9) scale(1,1)" font-size="9.8" fill="#fff" text-anchor="start" stroke="#fff" stroke-width="0.2"  textLength="32.5" lengthAdjust="spacingAndGlyphs">115.545</text>
<text transform="translate(687.5,266.9) scale(1,1)" font-size="9.8" fill="#fff" text-anchor="start" stroke="#fff" stroke-width="0.2"  textLength="32.5" lengthAdjust="spacingAndGlyphs">115.495</text>
<text transform="translate(687.5,300.9) scale(1,1)" font-size="9.8" fill="#fff" text-anchor="start" stroke="#fff" stroke-width="0.2"  textLength="32.5" lengthAdjust="spacingAndGlyphs">115.445</text>
<text transform="translate(687.5,335.9) scale(1,1)" font-size="9.8" fill="#fff" text-anchor="start" stroke="#fff" stroke-width="0.2"  textLength="32.5" lengthAdjust="spacingAndGlyphs">115.395</text>
<text transform="translate(687.5,370.9) scale(1,1)" font-size="9.8" fill="#fff" text-anchor="start" stroke="#fff" stroke-width="0.2"  textLength="32.5" lengthAdjust="spacingAndGlyphs">115.345</text>
<rect x="683" y="281" width="41" height="11" fill="#fff" shape-rendering="crispEdges"/>
<text transform="translate(687.5,289.9) scale(1,1)" font-size="9.8" fill="#000" text-anchor="start" stroke="#000" stroke-width="0.2"  textLength="32.5" lengthAdjust="spacingAndGlyphs">115.461</text>
<text transform="translate(17.3,385.9) scale(1,1)" font-size="9.8" fill="#fff" text-anchor="start" stroke="#fff" stroke-width="0.2"  textLength="108" lengthAdjust="spacingAndGlyphs">R(9,26,52) -50.0 86.5 81.8</text>
<text transform="translate(685.2,383.9) scale(1,1)" font-size="9.8" fill="#fff" text-anchor="start" stroke="#fff" stroke-width="0.2"  textLength="14.4" lengthAdjust="spacingAndGlyphs">120</text>
<text transform="translate(684.7,394.5) scale(1,1)" font-size="9.8" fill="#fff" text-anchor="start" stroke="#fff" stroke-width="0.2"  textLength="14.4" lengthAdjust="spacingAndGlyphs">100</text>
<text transform="translate(684,410.4) scale(1,1)" font-size="9.8" fill="#fff" text-anchor="start" stroke="#fff" stroke-width="0.2"  textLength="9.7" lengthAdjust="spacingAndGlyphs">80</text>
<text transform="translate(684,434.4) scale(1,1)" font-size="9.8" fill="#fff" text-anchor="start" stroke="#fff" stroke-width="0.2"  textLength="9.7" lengthAdjust="spacingAndGlyphs">50</text>
<text transform="translate(685,475.4) scale(1,1)" font-size="9.8" fill="#fff" text-anchor="start" stroke="#fff" stroke-width="0.2"  textLength="17" lengthAdjust="spacingAndGlyphs">0.00</text>
<text transform="translate(683.7,515.9) scale(1,1)" font-size="9.8" fill="#fff" text-anchor="start" stroke="#fff" stroke-width="0.2"  textLength="12.3" lengthAdjust="spacingAndGlyphs">-50</text>
<text transform="translate(683.7,540.4) scale(1,1)" font-size="9.8" fill="#fff" text-anchor="start" stroke="#fff" stroke-width="0.2"  textLength="12.3" lengthAdjust="spacingAndGlyphs">-80</text>
<text transform="translate(683.7,549.9) scale(1,1)" font-size="9.8" fill="#fff" text-anchor="start" stroke="#fff" stroke-width="0.2"  textLength="18.3" lengthAdjust="spacingAndGlyphs">-100</text>
<text transform="translate(12.3,565.6) scale(1,1)" font-size="9.8" fill="#fff" text-anchor="start" stroke="#fff" stroke-width="0.2"  textLength="45.5" lengthAdjust="spacingAndGlyphs">3 Mar 2022</text>
<text transform="translate(76.5,565.6) scale(1,1)" font-size="9.8" fill="#fff" text-anchor="start" stroke="#fff" stroke-width="0.2"  textLength="49" lengthAdjust="spacingAndGlyphs">3 Mar 13:25</text>
<text transform="translate(140.5,565.6) scale(1,1)" font-size="9.8" fill="#fff" text-anchor="start" stroke="#fff" stroke-width="0.2"  textLength="49" lengthAdjust="spacingAndGlyphs">3 Mar 14:45</text>
<text transform="translate(204.5,565.6) scale(1,1)" font-size="9.8" fill="#fff" text-anchor="start" stroke="#fff" stroke-width="0.2"  textLength="49" lengthAdjust="spacingAndGlyphs">3 Mar 16:05</text>
<text transform="translate(268.5,565.6) scale(1,1)" font-size="9.8" fill="#fff" text-anchor="start" stroke="#fff" stroke-width="0.2"  textLength="49" lengthAdjust="spacingAndGlyphs">3 Mar 17:25</text>
<text transform="translate(332.5,565.6) scale(1,1)" font-size="9.8" fill="#fff" text-anchor="start" stroke="#fff" stroke-width="0.2"  textLength="49" lengthAdjust="spacingAndGlyphs">3 Mar 18:45</text>
<text transform="translate(396.5,565.6) scale(1,1)" font-size="9.8" fill="#fff" text-anchor="start" stroke="#fff" stroke-width="0.2"  textLength="49" lengthAdjust="spacingAndGlyphs">3 Mar 20:05</text>
<text transform="translate(460.5,565.6) scale(1,1)" font-size="9.8" fill="#fff" text-anchor="start" stroke="#fff" stroke-width="0.2"  textLength="49" lengthAdjust="spacingAndGlyphs">3 Mar 21:25</text>
<text transform="translate(524.5,565.6) scale(1,1)" font-size="9.8" fill="#fff" text-anchor="start" stroke="#fff" stroke-width="0.2"  textLength="49" lengthAdjust="spacingAndGlyphs">3 Mar 22:45</text>
<text transform="translate(588.5,565.6) scale(1,1)" font-size="9.8" fill="#fff" text-anchor="start" stroke="#fff" stroke-width="0.2"  textLength="49" lengthAdjust="spacingAndGlyphs">4 Mar 00:05</text>
<text transform="translate(652.5,565.6) scale(1,1)" font-size="9.8" fill="#fff" text-anchor="start" stroke="#fff" stroke-width="0.2"  textLength="49" lengthAdjust="spacingAndGlyphs">4 Mar 01:25</text>
<polygon points="147,72 152,72 152,86 159,79 159,86 149.5,95.5 140,86 140,79 147,86" fill="#ffff00"/>
<polygon points="75,40 80,40 80,54 87,47 87,54 77.5,63.5 68,54 68,47 75,54" fill="#ffff00"/>
<polygon points="144.90,92.20 146.61,97.45 152.13,97.45 147.66,100.70 149.37,105.95 144.90,102.70 140.43,105.95 142.14,100.70 137.67,97.45 143.19,97.45" fill="#ffff00"/>
<polygon points="72.90,62.20 74.61,67.45 80.13,67.45 75.66,70.70 77.37,75.95 72.90,72.70 68.43,75.95 70.14,70.70 65.67,67.45 71.19,67.45" fill="#ffff00"/>
<text x="30.6" y="23.6" font-size="12" fill="#0a0a14" textLength="58.6" lengthAdjust="spacingAndGlyphs">USDJPY,M<tspan font-size="10.2">5</tspan></text>
<g shape-rendering="crispEdges">
<rect x="11.5" y="12.5" width="11" height="8" fill="#fff" stroke="#4a88f6"/>
<rect x="11" y="12" width="12" height="2" fill="#4a88f6"/>
<rect x="14.5" y="17.5" width="10" height="8" fill="#fff" stroke="#4a88f6"/>
<rect x="14" y="17" width="11" height="2" fill="#4a88f6"/>
<rect x="12" y="12" width="1" height="1" fill="#3f9a8a"/>
<rect x="14" y="12" width="1" height="1" fill="#3f9a8a"/>
<rect x="16" y="12" width="1" height="1" fill="#3f9a8a"/>
<rect x="18" y="12" width="1" height="1" fill="#3f9a8a"/>
<rect x="20" y="12" width="1" height="1" fill="#3f9a8a"/>
<rect x="22" y="12" width="1" height="1" fill="#3f9a8a"/>
<rect x="15" y="17" width="1" height="1" fill="#3f9a8a"/>
<rect x="17" y="17" width="1" height="1" fill="#3f9a8a"/>
<rect x="19" y="17" width="1" height="1" fill="#3f9a8a"/>
<rect x="21" y="17" width="1" height="1" fill="#3f9a8a"/>
<rect x="23" y="17" width="1" height="1" fill="#3f9a8a"/>
<rect x="11" y="14" width="1" height="1" fill="#3f9a8a"/>
<rect x="11" y="16" width="1" height="1" fill="#3f9a8a"/>
<rect x="11" y="18" width="1" height="1" fill="#3f9a8a"/>
<rect x="11" y="20" width="1" height="1" fill="#3f9a8a"/>
<rect x="14" y="19" width="1" height="1" fill="#3f9a8a"/><rect x="24" y="19" width="1" height="1" fill="#3f9a8a"/>
<rect x="14" y="21" width="1" height="1" fill="#3f9a8a"/><rect x="24" y="21" width="1" height="1" fill="#3f9a8a"/>
<rect x="14" y="23" width="1" height="1" fill="#3f9a8a"/><rect x="24" y="23" width="1" height="1" fill="#3f9a8a"/>
<rect x="14" y="25" width="1" height="1" fill="#3f9a8a"/><rect x="24" y="25" width="1" height="1" fill="#3f9a8a"/>
<rect x="13" y="16" width="1" height="1" fill="#3d7af0"/>
<rect x="14" y="15" width="1" height="1" fill="#3d7af0"/>
<rect x="15" y="16" width="1" height="1" fill="#3d7af0"/>
<rect x="17" y="15" width="1" height="1" fill="#3d7af0"/>
<rect x="18" y="16" width="1" height="1" fill="#3d7af0"/>
<rect x="17" y="14" width="1" height="1" fill="#3d7af0"/>
<rect x="16" y="20" width="1" height="1" fill="#3d7af0"/>
<rect x="17" y="21" width="1" height="1" fill="#3d7af0"/>
<rect x="17" y="22" width="1" height="1" fill="#3d7af0"/>
<rect x="18" y="23" width="1" height="1" fill="#3d7af0"/>
<rect x="19" y="22" width="1" height="1" fill="#3d7af0"/>
<rect x="19" y="21" width="1" height="1" fill="#3d7af0"/>
<rect x="20" y="20" width="1" height="1" fill="#3d7af0"/>
<rect x="21" y="21" width="1" height="1" fill="#3d7af0"/>
<rect x="21" y="22" width="1" height="1" fill="#3d7af0"/>
<rect x="22" y="23" width="1" height="1" fill="#3d7af0"/>
</g>
<rect x="626.5" y="9.5" width="33" height="19" rx="3" ry="3" fill="none" stroke="rgba(255,255,255,0.3)"/>
<rect x="627.5" y="10.5" width="31" height="17" rx="2" ry="2" fill="url(#bt)" stroke="#535d75"/>
<rect x="628.5" y="11.5" width="29" height="15" rx="2" ry="2" fill="none" stroke="rgba(225,236,248,0.8)"/>
<rect x="660.5" y="9.5" width="33" height="19" rx="3" ry="3" fill="none" stroke="rgba(255,255,255,0.3)"/>
<rect x="661.5" y="10.5" width="31" height="17" rx="2" ry="2" fill="url(#bt)" stroke="#535d75"/>
<rect x="662.5" y="11.5" width="29" height="15" rx="2" ry="2" fill="none" stroke="rgba(225,236,248,0.8)"/>
<rect x="694.5" y="9.5" width="33" height="19" rx="3" ry="3" fill="none" stroke="rgba(255,255,255,0.3)"/>
<rect x="695.5" y="10.5" width="31" height="17" rx="2" ry="2" fill="url(#bc)" stroke="#431520"/>
<rect x="696.5" y="11.5" width="29" height="15" rx="2" ry="2" fill="none" stroke="rgba(245,200,190,0.75)"/>
<rect x="637.5" y="18.5" width="10" height="4" rx="1.2" fill="#f2f2f2" stroke="#4a5468"/>
<rect x="671.5" y="14.5" width="10" height="8" rx="1.2" fill="#f2f2f2" stroke="#4a5468"/>
<rect x="674.5" y="17.5" width="4" height="2" fill="#7d9cc8" stroke="#4a5468"/>
<path d="M705.6 14.5 L709.2 14.5 L710.7 16.6 L712.2 14.5 L715.8 14.5 L712.7 18.4 L715.8 22.4 L712.2 22.4 L710.7 20.3 L709.2 22.4 L705.6 22.4 L708.7 18.4 Z" fill="#f4f4f4" stroke="#4a3038" stroke-width="0.9" stroke-linejoin="round"/>
</svg></body></html>
